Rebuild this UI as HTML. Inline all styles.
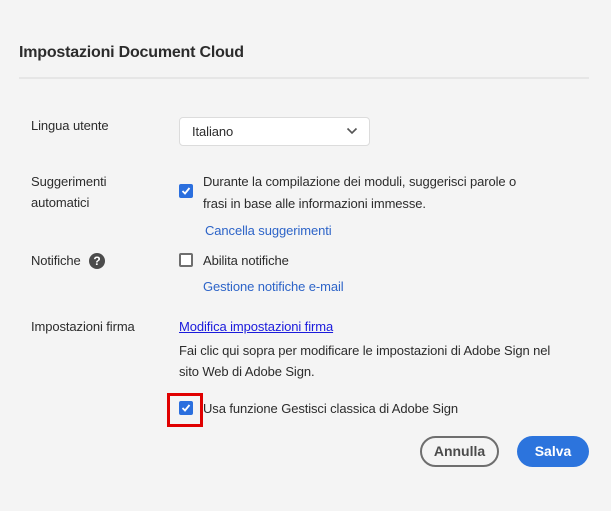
<!DOCTYPE html>
<html><head><meta charset="utf-8"><style>
body{margin:0;width:611px;height:511px;background:#f4f4f4;font-family:"Liberation Sans",sans-serif;color:#2c2c2c;position:relative;overflow:hidden}
.a{position:absolute;white-space:nowrap}
.t{font-size:13px;letter-spacing:-0.1px}
.cb{position:absolute;width:14px;height:14px;border-radius:2px;background:#2b6fde;box-sizing:border-box}
.cb svg{position:absolute;left:2px;top:2px}
.ub{position:absolute;width:14px;height:14px;border:2px solid #6e6e6e;border-radius:2px;box-sizing:border-box;background:#fff}
.lk{color:#2d64c8}
</style></head><body>
<div class="a" style="left:19px;top:44px;font-size:16px;font-weight:bold;color:#2c2c2c;letter-spacing:-0.2px">Impostazioni Document Cloud</div>
<div class="a" style="left:19px;top:77px;width:570px;height:2px;background:#e6e6e6"></div>

<div class="a t" style="left:31px;top:118px">Lingua utente</div>
<div class="a" style="left:179px;top:117px;width:191px;height:29px;background:#fff;border:1px solid #dcdcdc;border-radius:4px;box-sizing:border-box"></div>
<div class="a t" style="left:192px;top:124px">Italiano</div>
<svg class="a" style="left:346px;top:127px" width="12" height="8"><path d="M1.5 1.5 L6 6 L10.5 1.5" fill="none" stroke="#555" stroke-width="1.6"/></svg>

<div class="a t" style="left:31px;top:171px;line-height:21px">Suggerimenti<br>automatici</div>
<div class="cb" style="left:179px;top:184px"><svg width="10" height="10"><path d="M1.5 5 L4 7.5 L8.5 2" fill="none" stroke="#fff" stroke-width="1.8"/></svg></div>
<div class="a t" style="left:203px;top:171px;line-height:22px">Durante la compilazione dei moduli, suggerisci parole o<br>frasi in base alle informazioni immesse.</div>
<div class="a t lk" style="left:205px;top:223px">Cancella suggerimenti</div>

<div class="a t" style="left:31px;top:253px">Notifiche</div>
<div class="a" style="left:89px;top:253px;width:16px;height:16px;border-radius:50%;background:#4b4b4b;color:#fff;font-size:12px;font-weight:bold;text-align:center;line-height:16px">?</div>
<div class="ub" style="left:179px;top:253px"></div>
<div class="a t" style="left:203px;top:253px">Abilita notifiche</div>
<div class="a t lk" style="left:203px;top:279px">Gestione notifiche e-mail</div>

<div class="a t" style="left:31px;top:319px">Impostazioni firma</div>
<div class="a t" style="left:179px;top:319px;color:#1a1adc;text-decoration:underline">Modifica impostazioni firma</div>
<div class="a t" style="left:179px;top:340px;line-height:21px">Fai clic qui sopra per modificare le impostazioni di Adobe Sign nel<br>sito Web di Adobe Sign.</div>

<div class="a" style="left:167px;top:393px;width:36px;height:34px;border:3px solid #e00000;box-sizing:border-box"></div>
<div class="cb" style="left:179px;top:401px"><svg width="10" height="10"><path d="M1.5 5 L4 7.5 L8.5 2" fill="none" stroke="#fff" stroke-width="1.8"/></svg></div>
<div class="a t" style="left:203px;top:401px">Usa funzione Gestisci classica di Adobe Sign</div>

<div class="a" style="left:420px;top:436px;width:79px;height:31px;border:2px solid #6e6e6e;border-radius:16px;box-sizing:border-box;text-align:center;line-height:27px;font-size:14px;font-weight:bold;color:#4b4b4b">Annulla</div>
<div class="a" style="left:517px;top:436px;width:72px;height:31px;background:#2c74dd;border-radius:16px;text-align:center;line-height:31px;font-size:14px;font-weight:bold;color:#fff">Salva</div>
</body></html>
